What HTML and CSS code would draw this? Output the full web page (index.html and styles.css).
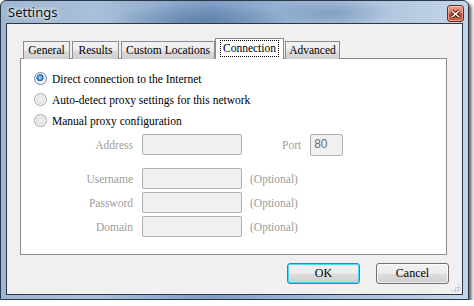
FILE: index.html
```html
<!DOCTYPE html>
<html lang="en">
<head>
  <meta charset="UTF-8" />
  <title>Settings</title>
  <link rel="stylesheet" href="styles.css">
</head>
<body>
  <!-- Dialog window -->
  <div class="window">
    <div class="titlebar">
      <span class="title">Settings</span>
      <span class="close">
        <svg width="9" height="8" viewBox="0 0 9 8"><path d="M1 1 L8 7 M8 1 L1 7" stroke="#3a1008" stroke-width="3.2"/><path d="M1 1 L8 7 M8 1 L1 7" stroke="#fff" stroke-width="1.6"/></svg>
      </span>
    </div>

    <div class="client">
      <!-- Tab strip -->
      <div class="tabs">
        <div class="tab t-general">General</div>
        <div class="tab t-results">Results</div>
        <div class="tab t-custom">Custom Locations</div>
        <div class="tab active"><span class="focus">Connection</span></div>
        <div class="tab t-advanced">Advanced</div>
      </div>

      <!-- Connection page -->
      <div class="panel">
        <div class="option"><span class="radio checked"></span>Direct connection to the Internet</div>
        <div class="option"><span class="radio"></span>Auto-detect proxy settings for this network</div>
        <div class="option"><span class="radio"></span>Manual proxy configuration</div>

        <div class="fields">
          <div class="row address">
            <span class="label">Address</span>
            <span class="input"></span>
            <span class="label port-label">Port</span>
            <span class="input port">80</span>
          </div>
          <div class="row">
            <span class="label">Username</span>
            <span class="input"></span>
            <span class="hint">(Optional)</span>
          </div>
          <div class="row">
            <span class="label">Password</span>
            <span class="input"></span>
            <span class="hint">(Optional)</span>
          </div>
          <div class="row">
            <span class="label">Domain</span>
            <span class="input"></span>
            <span class="hint">(Optional)</span>
          </div>
        </div>
      </div>

      <!-- Dialog buttons -->
      <div class="buttons">
        <button class="btn default">OK</button>
        <button class="btn">Cancel</button>
      </div>
      <span class="grip"></span>
    </div>
  </div>
</body>
</html>
```

FILE: styles.css
```css
* {
  margin: 0;
  padding: 0;
  box-sizing: border-box;
}
body {
  background: #fff;
  font-family: 'Liberation Serif', 'Times New Roman', serif;
  font-size: 11.5px;
  color: #000;
}

/* Window frame */
.window {
  width: 469px;
  height: 300px;
  display: flex;
  flex-direction: column;
  border: 1px solid #2a3848;
  border-radius: 6px 6px 0 0;
  background:
    radial-gradient(ellipse 90px 18px at 200px 20px, rgba(70, 105, 150, 0.55), transparent),
    radial-gradient(ellipse 60px 14px at 330px 12px, rgba(90, 125, 165, 0.45), transparent),
    linear-gradient(90deg, #9fb6d0 0%, #a9c0da 20%, #7f9ec4 45%, #9db7d6 65%, #b4c9e0 85%, #c4d5e8 100%);
  box-shadow: 2px 2px 3px rgba(0, 0, 0, 0.55), 4px 4px 4px rgba(0, 0, 0, 0.2);
}

.titlebar {
  height: 22px;
  display: flex;
  align-items: flex-start;
  justify-content: space-between;
  padding: 3px 4px 0 7px;
}
.title {
  font-family: 'Noto Sans', 'Open Sans', sans-serif;
  font-size: 13px;
  line-height: 16px;
  color: #111;
  text-shadow: 0 0 6px rgba(255, 255, 255, 0.9), 0 0 3px rgba(255, 255, 255, 0.8);
}
.close {
  width: 17px;
  height: 17px;
  margin-top: 1px;
  border: 1px solid #6b2a1f;
  border-radius: 3px;
  background: linear-gradient(#eaa290 0%, #d9735a 45%, #c24428 55%, #d0654a 100%);
  box-shadow: inset 0 0 0 1px rgba(255, 220, 210, 0.5);
  display: flex;
  align-items: center;
  justify-content: center;
}

/* Client area */
.client {
  flex: 1;
  position: relative;
  margin: 0 5px 4px 5px;
  border: 1px solid #2a3848;
  background: #f0f0f0;
  padding: 14px 15px 0 13px;
}

/* Tabs */
.tabs {
  display: flex;
  align-items: flex-end;
  height: 21px;
  padding-left: 3px;
  position: relative;
  z-index: 1;
  margin-bottom: -1px;
}
.tab {
  height: 18px;
  margin-right: 2px;
  border: 1px solid #898c95;
  border-bottom: none;
  background: linear-gradient(#f2f2f2 0%, #ebebeb 50%, #dddddd 51%, #cfcfcf 100%);
  line-height: 17px;
  text-align: center;
}
.t-general { width: 47px; }
.t-results { width: 47px; }
.t-custom { width: 94px; margin-right: 0; }
.t-advanced { width: 55px; margin-left: 1px; }
.tab.active {
  width: 69px;
  height: 21px;
  margin-right: 0;
  background: #fff;
  padding-top: 1px;
}
.focus {
  display: inline-block;
  border: 1px dotted #000;
  padding: 0 2px;
  line-height: 15px;
}

/* Page */
.panel {
  height: 197px;
  border: 1px solid #898c95;
  background: #fff;
  padding: 9px 0 0 13px;
}
.option {
  display: flex;
  align-items: center;
  height: 21px;
  gap: 5px;
}
.radio {
  width: 13px;
  height: 13px;
  border-radius: 50%;
  border: 1px solid #a3a3a3;
  background: radial-gradient(circle at 50% 50%, #f4f4f4 0%, #e4e4e4 45%, #cfcfcf 75%, #f0f0f0 100%);
  box-shadow: inset 0 0 0 1px #fff;
}
.radio.checked {
  border-color: #6a87aa;
  background:
    radial-gradient(circle at 45% 42%, #bfe6ff 0%, #3f94dd 25%, #1a5e9e 38%, transparent 44%),
    radial-gradient(circle, #e6ebf0 50%, #c8d0d9 100%);
}

/* Manual proxy fields */
.fields {
  margin-top: 3px;
  margin-left: -13px;
  color: #9d9d9d;
}
.row {
  display: flex;
  align-items: center;
  height: 21px;
  margin-bottom: 3px;
}
.row.address {
  margin-bottom: 13px;
}
.label {
  width: 112px;
  text-align: right;
}
.input {
  width: 100px;
  height: 21px;
  margin-left: 9px;
  border: 1px solid #adb2b5;
  border-radius: 2px;
  background: #f0f0f0;
}
.port-label {
  width: auto;
  margin-left: 40px;
}
.input.port {
  width: 33px;
  height: 22px;
  font-family: 'Liberation Sans', Arial, sans-serif;
  font-size: 12px;
  color: #6d6d6d;
  padding: 2px 0 0 3px;
}
.hint {
  margin-left: 8px;
}

/* Dialog buttons */
.buttons {
  display: flex;
  justify-content: flex-end;
  gap: 16px;
  margin-top: 8px;
  margin-right: -2px;
}
.btn {
  width: 73px;
  height: 21px;
  font-family: inherit;
  font-size: 12px;
  color: #000;
  border: 1px solid #707070;
  border-radius: 3px;
  background: linear-gradient(#f2f2f2 0%, #ebebeb 50%, #dddddd 51%, #cfcfcf 100%);
  box-shadow: inset 0 0 0 1px rgba(255, 255, 255, 0.7);
}
.btn.default {
  border-color: #3c7fb1;
  box-shadow: inset 0 0 0 1px #48d8fb;
}

/* Resize grip */
.grip {
  position: absolute;
  right: 2px;
  bottom: 2px;
  width: 9px;
  height: 9px;
  background:
    radial-gradient(circle, #b8b8b8 0.8px, transparent 1.2px) 0 0 / 3px 3px;
  clip-path: polygon(100% 0, 100% 100%, 0 100%);
}
```
